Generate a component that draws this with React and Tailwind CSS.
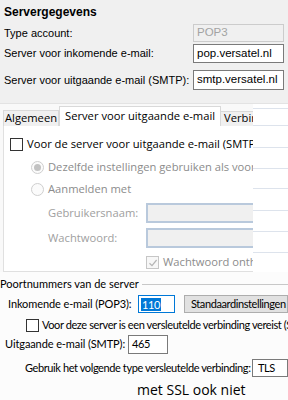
import React from 'react';

const tahoma = { fontFamily: '"Liberation Sans", Arial, sans-serif' };
const segoe = { fontFamily: '"Open Sans", "Noto Sans", sans-serif' };
const segoeSmall = { fontFamily: 'Lato, "Open Sans", sans-serif' };

const Box = ({ className = '', children }) => (
  <div className={`flex items-center overflow-hidden whitespace-nowrap ${className}`}>{children}</div>
);

const Check = ({ checked, disabled }) => (
  <span
    className={`flex h-[13px] w-[13px] shrink-0 items-center justify-center border ${
      disabled ? 'border-[#c6c6c6] bg-[#f7f7f7]' : 'border-[#333] bg-white'
    }`}
  >
    {checked && (
      <svg width="10" height="10" viewBox="0 0 10 10">
        <path d="M1.5 5.2 L4 7.6 L8.6 2" fill="none" stroke="#b5b5b5" strokeWidth="1.2" />
      </svg>
    )}
  </span>
);

const Radio = ({ selected }) => (
  <span className="flex h-[13px] w-[13px] shrink-0 items-center justify-center rounded-full border border-[#cfcfcf] bg-[#fbfbfb]">
    {selected && <span className="h-[7px] w-[7px] rounded-full bg-[#c2c2c2]" />}
  </span>
);

function TopPanel() {
  return (
    <div className="flex h-[103px] flex-col bg-[#f0f0f0] text-[11px] text-black whitespace-nowrap" style={tahoma}>
      <div className="pl-[4px] pt-[4px] text-[12px] font-bold leading-[16px]">Servergegevens</div>
      <div className="mt-[4px] flex h-[18px] items-center">
        <span className="w-[193px] shrink-0 pl-[4px]">Type account:</span>
        <Box className="h-[18px] w-[91px] border border-[#cccccc] bg-[#f0f0f0] pl-[3px] text-[11.5px] text-[#a3a3a3]">POP3</Box>
      </div>
      <div className="mt-[2px] flex h-[19px] items-center">
        <span className="w-[193px] shrink-0 pl-[4px]">Server voor inkomende e-mail:</span>
        <Box className="h-[19px] w-[91px] border border-[#7a7a7a] bg-white pl-[3px] text-[11.5px]">pop.versatel.nl</Box>
      </div>
      <div className="mt-[7px] flex h-[20px] items-center">
        <span className="w-[193px] shrink-0 pl-[4px]">Server voor uitgaande e-mail (SMTP):</span>
        <Box className="h-[20px] w-[91px] border border-[#7a7a7a] bg-white pl-[3px] text-[11.5px]">smtp.versatel.nl</Box>
      </div>
    </div>
  );
}

function SideStrip() {
  return (
    <div className="flex flex-1 flex-col bg-white">
      <div className="h-[5px] border-b border-[#dde3ec]" />
      <div className="h-[17px] border-b border-[#dde3ec]" />
      <div className="h-[22px] border-b border-[#dde3ec]" />
      <div className="h-[21px] border-b border-[#dde3ec]" />
      <div className="h-[20px] border-b border-[#dde3ec]" />
      <div className="h-[22px] border-b border-[#dde3ec]" />
      <div className="h-[21px] border-b border-[#dde3ec]" />
      <div className="h-[21px] border-b border-[#dde3ec]" />
    </div>
  );
}

function TabPanel() {
  return (
    <div className="flex h-[169px] border-t border-[#e3e3e3] text-[11.2px] whitespace-nowrap" style={segoe}>
      <div className="flex w-[253px] flex-col bg-[#f9f9f9] pl-[3px]">
        <div className="flex h-[22px] items-end">
          <div className="flex h-[16px] items-center border border-b-0 border-[#d9d9d9] bg-[#f0f0f0] px-[1px]">Algemeen</div>
          <div className="flex h-[20px] items-center border border-b-0 border-[#d9d9d9] bg-white px-[5px]">Server voor uitgaande e-mail</div>
          <div className="flex h-[15px] flex-1 items-center overflow-hidden border-t border-[#d9d9d9] bg-[#f0f0f0] px-[3px]">Verbindingen</div>
        </div>
        <div className="flex flex-1 flex-col border-b border-l border-[#e0e0e0] bg-white">
          <div className="mt-[10px] flex items-center gap-[4px] pl-[6px]">
            <Check />
            <span>Voor de server voor uitgaande e-mail (SMTP) is verificatie vereist</span>
          </div>
          <div className="mt-[6px] flex items-center gap-[4px] pl-[27px] text-[#8c8c8c]">
            <Radio selected />
            <span>Dezelfde instellingen gebruiken als voor inkomende e-mail</span>
          </div>
          <div className="mt-[6px] flex items-center gap-[4px] pl-[27px] text-[#8c8c8c]">
            <Radio />
            <span>Aanmelden met</span>
          </div>
          <div className="mt-[5px] flex h-[20px] items-center text-[#a0a0a0]">
            <span className="w-[142px] shrink-0 pl-[44px]">Gebruikersnaam:</span>
            <div className="h-[20px] flex-1 border-y-2 border-l-2 border-[#b9c9dc] bg-[#f0f0f0]" />
          </div>
          <div className="mt-[5px] flex h-[20px] items-center text-[#a0a0a0]">
            <span className="w-[142px] shrink-0 pl-[44px]">Wachtwoord:</span>
            <div className="h-[20px] flex-1 border-y-2 border-l-2 border-[#b9c9dc] bg-[#f0f0f0]" />
          </div>
          <div className="mt-[6px] flex items-center gap-[4px] overflow-hidden pl-[142px] text-[#8c8c8c]">
            <Check checked disabled />
            <span>Wachtwoord onthouden</span>
          </div>
        </div>
      </div>
      <SideStrip />
    </div>
  );
}

function PortPanel() {
  return (
    <div
      className="flex flex-1 flex-col overflow-hidden bg-[#fcfcfc] text-[11px] tracking-[-0.4px] text-black whitespace-nowrap"
      style={segoeSmall}
    >
      <div className="mt-[4px] flex items-center gap-[3px] leading-[16px]">
        <span className="tracking-normal">Poortnummers van de server</span>
        <div className="h-px flex-1 bg-[#c8c8c8]" />
      </div>
      <div className="mt-[3px] flex h-[18px] items-center">
        <span className="w-[138px] shrink-0 pl-[8px] tracking-[-0.1px]">Inkomende e-mail (POP3):</span>
        <Box className="h-[18px] w-[37px] shrink-0 border border-[#0078d7] bg-white pl-[2px]">
          <span className="bg-[#0078d7] px-px leading-[13px] text-white">110</span>
        </Box>
        <Box className="ml-[9px] h-[18px] flex-1 border border-[#adadad] bg-[#e1e1e1] pl-[6px]">Standaardinstellingen gebruiken</Box>
      </div>
      <div className="mt-[6px] flex h-[13px] items-center gap-[3px] pl-[26px]">
        <Check />
        <span>Voor deze server is een versleutelde verbinding vereist (SSL)</span>
      </div>
      <div className="mt-[3px] flex h-[19px] items-center">
        <span className="w-[128px] shrink-0 pl-[5px] tracking-[-0.1px]">Uitgaande e-mail (SMTP):</span>
        <Box className="h-[19px] w-[40px] border border-[#7a7a7a] bg-white pl-[3px]">465</Box>
      </div>
      <div className="mt-[5px] flex h-[18px] items-center">
        <span className="w-[252px] shrink-0 pl-[25px]">Gebruik het volgende type versleutelde verbinding:</span>
        <Box className="h-[18px] flex-1 border border-[#7a7a7a] bg-white pl-[5px]">TLS</Box>
      </div>
      <div className="mt-[3px] pl-[137px] text-[14px] leading-[20px] tracking-normal" style={segoe}>
        met SSL ook niet
      </div>
    </div>
  );
}

export default function App() {
  return (
    <div className="flex h-[400px] w-[288px] flex-col overflow-hidden bg-white">
      <TopPanel />
      <TabPanel />
      <PortPanel />
    </div>
  );
}
